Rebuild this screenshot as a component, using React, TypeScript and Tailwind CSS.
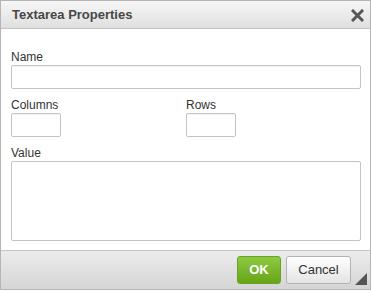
const font = { fontFamily: '"Liberation Sans", Arial, sans-serif' };

function Field({ label, children }: { label: string; children: React.ReactNode }) {
  return (
    <div className="flex flex-col">
      <label className="text-[12px] leading-[15px] text-[#333]">{label}</label>
      {children}
    </div>
  );
}

const inputCls =
  'h-[24px] rounded-[2px] border border-[#c4c4c4] bg-white outline-none shadow-[inset_0_1px_1px_rgba(0,0,0,0.05)]';

export default function App() {
  return (
    <div className="bg-white" style={font}>
      <div className="flex h-[290px] w-[371px] flex-col border border-[#b5b5b5] bg-white">
        <div className="flex h-[28px] shrink-0 items-center justify-between border-b border-[#c3c3c3] bg-gradient-to-b from-[#f7f7f7] to-[#dfdfdf] pl-[11px] pr-[6px]">
          <span className="text-[13px] font-bold text-[#474747]">Textarea Properties</span>
          <svg width="13" height="13" viewBox="0 0 13 13" className="mt-[1px]">
            <path d="M2 2 L11 11 M11 2 L2 11" stroke="#565656" strokeWidth="3" strokeLinecap="square" />
          </svg>
        </div>
        <div className="flex flex-col gap-[9px] pb-[9px] pl-[10px] pr-[9px] pt-[21px]">
          <Field label="Name">
            <input className={inputCls} />
          </Field>
          <div className="flex">
            <div className="w-[175px]">
              <Field label="Columns">
                <input className={`${inputCls} w-[50px]`} />
              </Field>
            </div>
            <Field label="Rows">
              <input className={`${inputCls} w-[50px]`} />
            </Field>
          </div>
          <Field label="Value">
            <textarea className="h-[80px] resize-none rounded-[2px] border border-[#c4c4c4] bg-white outline-none" />
          </Field>
        </div>
        <div className="relative flex flex-1 items-center justify-end gap-[5px] border-t border-[#c6c6c6] bg-gradient-to-b from-[#ececec] to-[#d5d5d5] pr-[19px]">
          <button className="h-[28px] w-[44px] rounded-[3px] border border-[#68a420] bg-gradient-to-b from-[#8fc943] to-[#67a514] text-[13px] font-bold text-white">
            OK
          </button>
          <button className="h-[28px] w-[65px] rounded-[3px] border border-[#b3b3b3] bg-gradient-to-b from-[#ffffff] to-[#e4e4e4] text-[13px] text-[#333]">
            Cancel
          </button>
          <svg width="12" height="12" viewBox="0 0 12 12" className="absolute bottom-[4px] right-[3px]">
            <path d="M12 0 L12 12 L0 12 Z" fill="#555" />
          </svg>
        </div>
      </div>
    </div>
  );
}
